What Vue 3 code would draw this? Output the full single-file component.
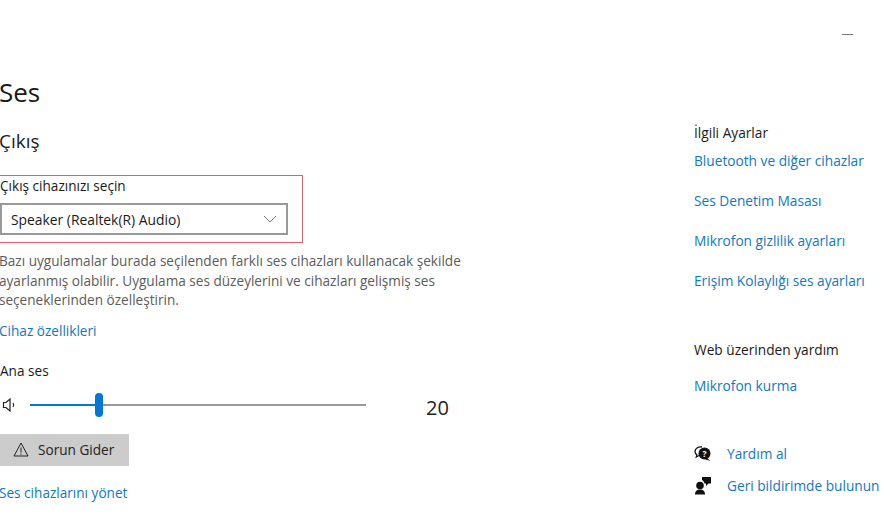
<script setup>
const relatedLinks = [
  'Bluetooth ve diğer cihazlar',
  'Ses Denetim Masası',
  'Mikrofon gizlilik ayarları',
  'Erişim Kolaylığı ses ayarları'
]
</script>

<template>
  <div class="window">
    <div class="titlebar"><span class="minimize"></span></div>
    <div class="columns">
      <main class="main">
        <h1>Ses</h1>
        <h2>Çıkış</h2>
        <div class="select-box">
          <div class="select-label">Çıkış cihazınızı seçin</div>
          <div class="select">
            <span>Speaker (Realtek(R) Audio)</span>
            <svg width="14" height="8" viewBox="0 0 14 8" fill="none" stroke="#777" stroke-width="1">
              <path d="M1 1l6 6 6-6" />
            </svg>
          </div>
        </div>
        <p class="desc">
          Bazı uygulamalar burada seçilenden farklı ses cihazları kullanacak şekilde<br />
          ayarlanmış olabilir. Uygulama ses düzeylerini ve cihazları gelişmiş ses<br />
          seçeneklerinden özelleştirin.
        </p>
        <a class="link device-link">Cihaz özellikleri</a>
        <div class="volume-label">Ana ses</div>
        <div class="volume">
          <svg class="speaker" width="16" height="16" viewBox="0 0 16 16" fill="none" stroke="#222" stroke-width="1.2">
            <path d="M2.5 5.5h2.5l4-3.5v12l-4-3.5H2.5z" />
            <path d="M12 6c.9 1.200.9 2.800 0 4" />
          </svg>
          <div class="track">
            <div class="fill"></div>
            <div class="thumb"></div>
          </div>
          <span class="value">20</span>
        </div>
        <button class="trouble">
          <svg width="16" height="15" viewBox="0 0 16 15" fill="none" stroke="#222" stroke-width="1">
            <path d="M8 1L15 14H1z" />
            <path d="M8 5.500v5M8 11.500v1.200" />
          </svg>
          Sorun Gider
        </button>
        <a class="link manage-link">Ses cihazlarını yönet</a>
      </main>
      <aside class="side">
        <div class="side-title">İlgili Ayarlar</div>
        <a v-for="item in relatedLinks" :key="item" class="link side-link">{{ item }}</a>
        <div class="side-title web-title">Web üzerinden yardım</div>
        <a class="link side-link">Mikrofon kurma</a>
        <div class="help-row first">
          <svg width="18" height="16" viewBox="0 0 18 16">
            <path d="M8 1C4 .6 1 2.500 1 5.500c0 1.500.8 2.500 1.800 3.300L2.300 11l2.700-1.500" fill="none" stroke="#111" stroke-width="1.300" />
            <circle cx="10.500" cy="7.500" r="6" fill="#111" />
            <path d="M13 12l3.500 3-5-1.500z" fill="#111" />
            <text x="10.500" y="10.500" font-size="8.500" font-weight="700" fill="#fff" text-anchor="middle" font-family="Open Sans, sans-serif">?</text>
          </svg>
          <a class="link">Yardım al</a>
        </div>
        <div class="help-row second">
          <svg width="18" height="18" viewBox="0 0 18 18" fill="#111">
            <path d="M8 0h9v6.500h-2.500L12 9V6.500h-1.500C10 4.500 9 3.500 8 3z" />
            <circle cx="6" cy="8.500" r="3.800" />
            <path d="M1 17.500c0-3.500 2-5 5-5s5 1.500 5 5z" />
          </svg>
          <a class="link">Geri bildirimde bulunun</a>
        </div>
      </aside>
    </div>
  </div>
</template>

<style scoped>
.window {
  width: 890px;
  height: 530px;
  overflow: hidden;
  background: #fff;
  color: #1a1a1a;
  font-family: "Open Sans", "Noto Sans", sans-serif;
  font-size: 13.6px;
}
.titlebar {
  height: 35px;
  display: flex;
  justify-content: flex-end;
  align-items: flex-end;
  padding-right: 37px;
}
.minimize {
  width: 11px;
  height: 1px;
  background: #777;
}
.columns {
  display: flex;
}
.main {
  width: 694px;
  flex: none;
  display: flex;
  flex-direction: column;
  align-items: flex-start;
}
h1 {
  margin: 37px 0 0 -1px;
  font-size: 26px;
  font-weight: 400;
  line-height: 40px;
}
h2 {
  margin: 16px 0 0 -1px;
  font-size: 19px;
  font-weight: 400;
  line-height: 26px;
}
.select-box {
  margin: 21px 0 0 -1px;
  width: 304px;
  height: 68px;
  box-sizing: border-box;
  border: 1px solid #d9636b;
}
.select-label {
  line-height: 20px;
}
.select {
  margin: 7px 0 0;
  width: 288px;
  height: 32px;
  box-sizing: border-box;
  border: 2px solid #999;
  display: flex;
  align-items: center;
  justify-content: space-between;
  padding: 0 9px 0 9px;
  font-size: 13.85px;
}
.desc {
  margin: 8px 0 0 -1px;
  color: #5c5c5c;
  line-height: 19.500px;
  white-space: nowrap;
}
.link {
  color: #0f78c8;
}
.device-link {
  margin: 11px 0 0 -1px;
  line-height: 20px;
}
.volume-label {
  margin: 20px 0 0;
  line-height: 20px;
}
.volume {
  margin-top: 12px;
  display: flex;
  align-items: center;
  height: 24px;
}
.speaker {
  margin-left: 1px;
  flex: none;
}
.track {
  position: relative;
  margin-left: 13px;
  width: 336px;
  height: 2px;
  background: #999;
}
.fill {
  width: 69px;
  height: 2px;
  background: #0078d7;
}
.thumb {
  position: absolute;
  left: 65px;
  top: -11px;
  width: 8px;
  height: 24px;
  border-radius: 4px;
  background: #0078d7;
}
.value {
  margin-left: 60px;
  font-size: 20px;
  color: #222;
  position: relative;
  top: 3px;
}
.trouble {
  margin-top: 17px;
  width: 129px;
  height: 32px;
  border: 0;
  background: #ccc;
  font: inherit;
  color: #222;
  display: flex;
  align-items: center;
  gap: 9px;
  padding: 0 0 0 13px;
}
.manage-link {
  margin: 17px 0 0 -1px;
  line-height: 20px;
}
.side {
  flex: 1;
  display: flex;
  flex-direction: column;
  align-items: flex-start;
  white-space: nowrap;
  font-size: 13.7px;
}
.side-title {
  margin-top: 88px;
  line-height: 20px;
}
.side-link {
  margin-top: 20px;
  line-height: 20px;
}
.side-title + .side-link {
  margin-top: 8px;
}
.side-title.web-title {
  margin-top: 49px;
}
.side-title.web-title + .side-link {
  margin-top: 16px;
}
.help-row {
  display: flex;
  align-items: center;
  gap: 15px;
  line-height: 20px;
}
.help-row.first {
  margin-top: 48px;
}
.help-row.second {
  margin-top: 12px;
}
</style>
